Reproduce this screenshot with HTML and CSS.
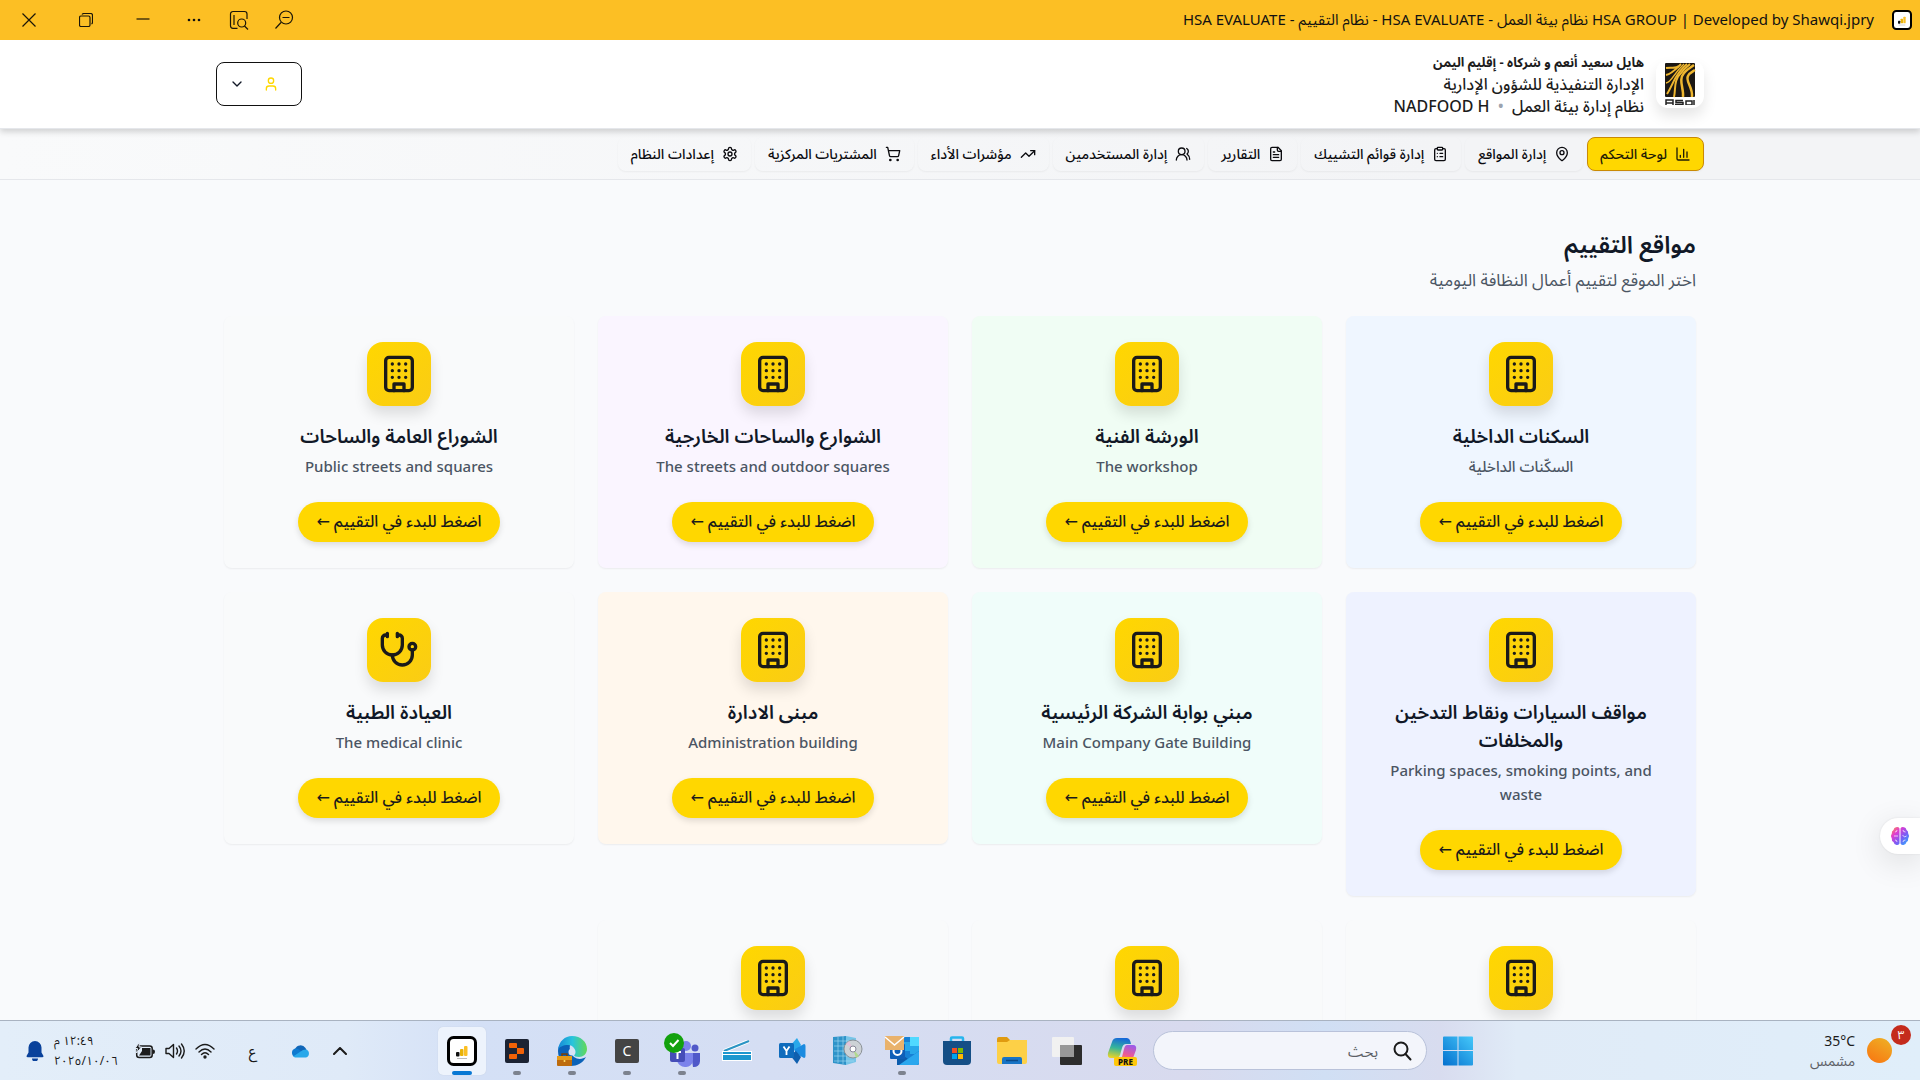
FILE: index.html
```html
<!DOCTYPE html>
<html lang="ar" dir="rtl">
<head>
<meta charset="utf-8">
<meta name="viewport" content="width=device-width, initial-scale=1">
<title>HSA EVALUATE - نظام التقييم</title>
<link rel="stylesheet" href="styles.css">
</head>
<body>
<svg class="sprite" aria-hidden="true">
  <symbol id="building" viewBox="0 0 24 24"><rect x="4" y="2" width="16" height="20" rx="2"/><path d="M9 22v-4h6v4M8 6h.01M16 6h.01M12 6h.01M12 10h.01M12 14h.01M16 10h.01M16 14h.01M8 10h.01M8 14h.01"/></symbol>
  <symbol id="stethoscope" viewBox="0 0 24 24"><path d="M11 2v2M5 2v2M5 3H4a2 2 0 0 0-2 2v4a6 6 0 0 0 12 0V5a2 2 0 0 0-2-2h-1"/><path d="M8 15a6 6 0 0 0 12 0v-3"/><circle cx="20" cy="10" r="2"/></symbol>
  <symbol id="chart" viewBox="0 0 24 24"><path d="M3 3v16a2 2 0 0 0 2 2h16M18 17V9M13 17V5M8 17v-3"/></symbol>
  <symbol id="pin" viewBox="0 0 24 24"><path d="M20 10c0 5-5.5 10.200-7.400 11.800a1 1 0 0 1-1.200 0C9.500 20.200 4 15 4 10a8 8 0 0 1 16 0"/><circle cx="12" cy="10" r="3"/></symbol>
  <symbol id="clipboard" viewBox="0 0 24 24"><rect x="8" y="2" width="8" height="4" rx="1"/><path d="M16 4h2a2 2 0 0 1 2 2v14a2 2 0 0 1-2 2H6a2 2 0 0 1-2-2V6a2 2 0 0 1 2-2h2M12 11h4M12 16h4M8 11h.01M8 16h.01"/></symbol>
  <symbol id="file" viewBox="0 0 24 24"><path d="M15 2H6a2 2 0 0 0-2 2v16a2 2 0 0 0 2 2h12a2 2 0 0 0 2-2V7Z"/><path d="M14 2v4a2 2 0 0 0 2 2h4M10 9H8M16 13H8M16 17H8"/></symbol>
  <symbol id="users" viewBox="0 0 24 24"><path d="M18 21a8 8 0 0 0-16 0"/><circle cx="10" cy="8" r="5"/><path d="M22 20c0-3.370-2-6.500-4-8a5 5 0 0 0-.450-8.300"/></symbol>
  <symbol id="trend" viewBox="0 0 24 24"><path d="m22 7-8.500 8.500-5-5L2 17"/><path d="M16 7h6v6"/></symbol>
  <symbol id="cart" viewBox="0 0 24 24"><circle cx="8" cy="21" r="1"/><circle cx="19" cy="21" r="1"/><path d="M2.050 2.050h2l2.660 12.420a2 2 0 0 0 2 1.580h9.780a2 2 0 0 0 1.950-1.570l1.650-7.430H5.120"/></symbol>
  <symbol id="gear" viewBox="0 0 24 24"><path d="M12.220 2h-.440a2 2 0 0 0-2 2v.180a2 2 0 0 1-1 1.730l-.430.250a2 2 0 0 1-2 0l-.150-.080a2 2 0 0 0-2.730.730l-.220.380a2 2 0 0 0 .730 2.730l.150.100a2 2 0 0 1 1 1.720v.510a2 2 0 0 1-1 1.740l-.150.090a2 2 0 0 0-.730 2.730l.220.380a2 2 0 0 0 2.730.730l.150-.080a2 2 0 0 1 2 0l.430.250a2 2 0 0 1 1 1.730V20a2 2 0 0 0 2 2h.440a2 2 0 0 0 2-2v-.180a2 2 0 0 1 1-1.730l.430-.250a2 2 0 0 1 2 0l.150.080a2 2 0 0 0 2.730-.730l.220-.390a2 2 0 0 0-.730-2.730l-.150-.080a2 2 0 0 1-1-1.740v-.500a2 2 0 0 1 1-1.740l.150-.090a2 2 0 0 0 .730-2.730l-.220-.380a2 2 0 0 0-2.730-.730l-.150.080a2 2 0 0 1-2 0l-.430-.250a2 2 0 0 1-1-1.730V4a2 2 0 0 0-2-2z"/><circle cx="12" cy="12" r="3"/></symbol>
  <symbol id="user" viewBox="0 0 24 24"><path d="M19 21v-2a4 4 0 0 0-4-4H9a4 4 0 0 0-4 4v2"/><circle cx="12" cy="7" r="4"/></symbol>
  <symbol id="chevron" viewBox="0 0 24 24"><path d="m6 9 6 6 6-6"/></symbol>
  <symbol id="appmark" viewBox="0 0 30 30"><rect x="1.500" y="1.500" width="27" height="27" rx="5" fill="#fff" stroke="#000" stroke-width="3"/><rect x="9" y="16" width="3.500" height="4.500" rx="1" fill="#111"/><rect x="13" y="13" width="3.500" height="7" rx="1" fill="#e9b308"/><rect x="17" y="10" width="3.500" height="10" rx="1" fill="#fbbf24"/><path d="M10 22.500h10" stroke="#bbb"/></symbol>
</svg>

<header class="titlebar" dir="ltr">
  <div class="window-tools">
    <button aria-label="إغلاق"><svg width="14" height="14" viewBox="0 0 14 14"><path d="m.5.5 13 13M13.500.5l-13 13"/></svg></button>
    <button aria-label="استعادة"><svg width="14" height="14" viewBox="0 0 14 14"><rect x=".5" y="3" width="10.500" height="10.500" rx="1.500"/><path d="M3 1.500C3.500.7 4 .5 5 .5h6.500a2 2 0 0 1 2 2V9q0 1.500-1 2"/></svg></button>
    <button aria-label="تصغير"><svg width="14" height="14" viewBox="0 0 14 14"><path d="M.5 6h13"/></svg></button>
    <button class="narrow" aria-label="المزيد"><svg width="14" height="14" viewBox="0 0 14 14"><g fill="#111" stroke="none"><circle cx="2" cy="7" r="1.300"/><circle cx="7" cy="7" r="1.300"/><circle cx="12" cy="7" r="1.300"/></g></svg></button>
    <button class="narrow" aria-label="بحث في الصفحة"><svg width="20" height="20" viewBox="0 0 20 20"><path d="M8.500 18.300H4A2.500 2.500 0 0 1 1.500 15.800V4A2.500 2.500 0 0 1 4 1.500h11.500A2.500 2.500 0 0 1 18 4v5M5 5v10M15.500 16l3.500 3.500"/><circle cx="12.700" cy="13" r="4"/></svg></button>
    <button class="narrow" aria-label="تصغير العرض"><svg width="20" height="20" viewBox="0 0 20 20"><circle cx="12" cy="7.500" r="6.500"/><path d="M1.500 18.500 7 12.500M8.500 7.500h7"/></svg></button>
  </div>
  <div class="window-title">HSA EVALUATE - نظام التقييم - HSA EVALUATE - نظام بيئة العمل HSA GROUP | Developed by Shawqi.jpry</div>
  <svg class="window-icon"><use href="#appmark"/></svg>
</header>

<div class="page">
  <header class="masthead">
    <div class="container masthead-row">
      <div class="brand">
        <div class="logo">
          <svg width="32" height="42" viewBox="0 0 32 42" role="img" aria-label="HSA">
            <rect x="1" width="30" height="34" rx="1" fill="#1b1713"/>
            <g fill="none" stroke="#eeb62f"><path d="M2 5C8 4 12 6 15 3" stroke-width="2"/><path d="M2 12C8 11 12 6 17 1" stroke-width="2"/><path d="M2 20C8 19 9 11 20 1" stroke-width="1.500"/><path d="M3 31C7 25 10 16 14 11S18 5 23 1" stroke-width="2"/><path d="M10 34C12 26 9 17 18 9 20 6 23 4 26 1" stroke-width="2"/><path d="M19 34C20 25 14 17 20 10 22 7 26 5 30 2" stroke-width="2.500"/><path d="M28 34C29 24 21 18 24 13 25 10 28 9 31 7" stroke-width="2.500"/></g>
            <g fill="none" stroke="#222" stroke-width="1.500"><path d="M2 42v-5h7v5M2 40h7M19 37.500h-7v2h7v2h-8M22 42v-4h6v4h-6M30 37v5"/></g>
          </svg>
        </div>
        <div class="brand-text">
          <strong>هايل سعيد أنعم و شركاه - إقليم اليمن</strong>
          <span>الإدارة التنفيذية للشؤون الإدارية</span>
          <span>نظام إدارة بيئة العمل <i class="dot">•</i> <span class="site">NADFOOD H</span></span>
        </div>
      </div>
      <button class="account" aria-label="الحساب"><svg class="line account-user"><use href="#user"/></svg><svg class="line account-chevron"><use href="#chevron"/></svg></button>
    </div>
  </header>

  <nav class="tabs">
    <div class="container tabs-row">
      <a class="tab active" href="#"><svg class="line"><use href="#chart"/></svg>لوحة التحكم</a>
      <a class="tab" href="#"><svg class="line"><use href="#pin"/></svg>إدارة المواقع</a>
      <a class="tab" href="#"><svg class="line"><use href="#clipboard"/></svg>إدارة قوائم التشييك</a>
      <a class="tab" href="#"><svg class="line"><use href="#file"/></svg>التقارير</a>
      <a class="tab" href="#"><svg class="line"><use href="#users"/></svg>إدارة المستخدمين</a>
      <a class="tab" href="#"><svg class="line"><use href="#trend"/></svg>مؤشرات الأداء</a>
      <a class="tab" href="#"><svg class="line"><use href="#cart"/></svg>المشتريات المركزية</a>
      <a class="tab" href="#"><svg class="line"><use href="#gear"/></svg>إعدادات النظام</a>
    </div>
  </nav>

  <main class="container content">
    <h1>مواقع التقييم</h1>
    <p class="lead">اختر الموقع لتقييم أعمال النظافة اليومية</p>
    <div class="grid">
      <article class="card blue"><div class="badge"><svg class="line"><use href="#building"/></svg></div><h2>السكنات الداخلية</h2><p>السكّنات الداخلية</p><button>اضغط للبدء في التقييم ←</button></article>
      <article class="card green"><div class="badge"><svg class="line"><use href="#building"/></svg></div><h2>الورشة الفنية</h2><p>The workshop</p><button>اضغط للبدء في التقييم ←</button></article>
      <article class="card purple"><div class="badge"><svg class="line"><use href="#building"/></svg></div><h2>الشوارع والساحات الخارجية</h2><p>The streets and outdoor squares</p><button>اضغط للبدء في التقييم ←</button></article>
      <article class="card"><div class="badge"><svg class="line"><use href="#building"/></svg></div><h2>الشوراع العامة والساحات</h2><p>Public streets and squares</p><button>اضغط للبدء في التقييم ←</button></article>
      <article class="card indigo"><div class="badge"><svg class="line"><use href="#building"/></svg></div><h2>مواقف السيارات ونقاط التدخين والمخلفات</h2><p dir="ltr">Parking spaces, smoking points, and waste</p><button>اضغط للبدء في التقييم ←</button></article>
      <article class="card teal"><div class="badge"><svg class="line"><use href="#building"/></svg></div><h2>مبني بوابة الشركة الرئيسية</h2><p>Main Company Gate Building</p><button>اضغط للبدء في التقييم ←</button></article>
      <article class="card orange"><div class="badge"><svg class="line"><use href="#building"/></svg></div><h2>مبنى الادارة</h2><p>Administration building</p><button>اضغط للبدء في التقييم ←</button></article>
      <article class="card"><div class="badge"><svg class="line"><use href="#stethoscope"/></svg></div><h2>العيادة الطبية</h2><p>The medical clinic</p><button>اضغط للبدء في التقييم ←</button></article>
      <article class="card"><div class="badge"><svg class="line"><use href="#building"/></svg></div></article>
      <article class="card"><div class="badge"><svg class="line"><use href="#building"/></svg></div></article>
      <article class="card"><div class="badge"><svg class="line"><use href="#building"/></svg></div></article>
    </div>
  </main>

  <button class="assistant" aria-label="المساعد">
    <svg width="20" height="20" viewBox="0 0 20 20"><defs><linearGradient id="br" x1="0" y1="0" x2="1" y2="1"><stop offset="0" stop-color="#ff9a3c"/><stop offset=".3" stop-color="#e23bd0"/><stop offset=".6" stop-color="#7b5cf5"/><stop offset="1" stop-color="#25b5ff"/></linearGradient></defs><path fill="url(#br)" d="M9.500 2.500Q8.500.5 6 1.200 4 1.500 3.500 4 1.500 5 1.800 7.500 0 10 1.800 12.500 1.500 15 3.500 16 4 18.500 6.500 19q2 .3 3-1.500zM10.500 2.500Q11.500.5 14 1.200q2 .3 2.500 2.800 2 1 1.700 3.500 1.800 2.500 0 5 .3 2.500-1.700 3.500-.5 2.500-3 3-2 .3-3-1.500z"/><path d="M4 10h4M5 6q2 0 2-2M5 14q2 0 2 2M13 4q0 2 2.500 2M12.500 9l2 2 2-1M13 16q0-2 2.500-2" fill="none" stroke="#fff" opacity=".7"/></svg>
  </button>
</div>

<footer class="taskbar" dir="ltr">
  <div class="tray">
    <svg width="18" height="20" viewBox="0 0 18 20"><path fill="#0a429b" d="M9 0a6.500 6.500 0 0 1 6.500 6.500v5l2 3.500a1 1 0 0 1-1 1.200h-15A1 1 0 0 1 .5 15l2-3.500v-5A6.500 6.500 0 0 1 9 0M6 17.500h6a3 3 0 0 1-6 0"/></svg>
    <div class="clock"><span dir="rtl">١٢:٤٩ م</span><span>٢٠٢٥/١٠/٠٦</span></div>
    <div class="status">
      <svg width="20" height="18" viewBox="0 0 20 18"><rect x="1.700" y="4" width="15.500" height="11.500" rx="2.500" fill="none" stroke="#1b1b1b" stroke-width="1.500"/><path fill="#1b1b1b" d="M18 7.500q2 0 2 2.200T18 12zM7 6h8.500v7.500H4L7 9z"/><path fill="#1b1b1b" stroke="#e2ecf8" d="M4.500 0 0 6.500h2.500L1.500 11l5-6H4z"/></svg>
      <svg class="stroked" width="20" height="18" viewBox="0 0 20 18"><path d="M1 6.500h3l4.500-4v13l-4.500-4H1zM11.500 6q2 3 0 6M14 4q4 5 0 10M16.500 2q5.500 7 0 14"/></svg>
      <svg class="stroked" width="20" height="18" viewBox="0 0 20 18"><path d="M1 7q9-9 18 0M4 10q6-6 12 0M6.500 12.500q3.500-3.500 7 0"/><circle cx="10" cy="15" r="1" fill="#1b1b1b"/></svg>
    </div>
    <span class="lang">ع</span>
    <svg width="20" height="14" viewBox="0 0 20 14"><path fill="#1066b8" d="M5 5a6 6 0 0 1 10.500-1l2 4L7 12z"/><path fill="#0f7ad0" d="M5 4.500a5 5 0 0 1 4 1L14 10l-9 3A4.500 4.500 0 0 1 5 4.500"/><path fill="#28a8ea" d="M3 12.500 13 6l3-.5a4.200 4.200 0 0 1 0 8H5z"/></svg>
    <svg class="stroked thick" width="14" height="8" viewBox="0 0 14 8"><path d="m1 7 6-6 6 6"/></svg>
  </div>

  <div class="dock">
    <button class="app current" aria-label="HSA EVALUATE"><svg width="30" height="30"><use href="#appmark"/></svg></button>
    <button class="app open" aria-label="Replit"><svg width="24" height="24" viewBox="0 0 24 24"><rect width="24" height="24" rx="2" fill="#1c2333"/><path fill="#f26207" d="M5 4h6a1 1 0 0 1 1 1v4H5a1 1 0 0 1-1-1V5a1 1 0 0 1 1-1M12 9h6a1 1 0 0 1 1 1v4a1 1 0 0 1-1 1h-6zM5 15h7v4a1 1 0 0 1-1 1H5a1 1 0 0 1-1-1v-3a1 1 0 0 1 1-1"/></svg></button>
    <button class="app open" aria-label="Edge"><svg width="32" height="32" viewBox="0 0 32 32"><defs><linearGradient id="e1" x1="0" x2="1"><stop offset="0" stop-color="#1689d8"/><stop offset=".5" stop-color="#28c4dc"/><stop offset="1" stop-color="#63d957"/></linearGradient></defs><path fill="#0b62b8" d="M2 16C2 9 8 5 15 7c-2 4-2 11 3 15 4 3 9 2 12 0-3 6-9 9-15 9C8 31 2 25 2 16"/><path fill="url(#e1)" d="M2 15C3 6 9 1 16 1c9 0 15 6 15 13 0 5-4 8-8 8-3 0-5-1-5-2s1-1 1-4-3-6-7-6C7 10 3 12 2 15"/><circle cx="16" cy="17" r="3.500" fill="#d8e3f6"/><rect x="1" y="21" width="15" height="10" rx="1" fill="#bd6b0c"/><path fill="#e59a18" d="M1 21h15v4H1z"/><path d="M6 21v-2h5v2" fill="none" stroke="#784006" stroke-width="1.500"/><circle cx="8.500" cy="26" r="1" fill="#ffe06a"/></svg></button>
    <button class="app open" aria-label="C"><span class="letter">C</span></button>
    <button class="app open" aria-label="Teams"><svg width="36" height="36" viewBox="0 0 36 36"><circle cx="22" cy="13" r="5" fill="#7b83eb"/><circle cx="31" cy="15" r="3.500" fill="#5059c9"/><path fill="#5059c9" d="M27 20h9v8a6 6 0 0 1-7 6z"/><path fill="#7b83eb" d="M13 20h16v7a7 7 0 0 1-8 7 8 8 0 0 1-8-7z"/><rect x="6" y="15" width="15" height="14" rx="2" fill="#454db8"/><path d="M10 19h7M13.500 19v7" stroke="#fff" stroke-width="2"/><circle cx="10" cy="10" r="10" fill="#13a10e"/><path d="m6 10 3 3 5.500-6" fill="none" stroke="#fff" stroke-width="2"/></svg></button>
    <button class="app" aria-label="Scanner"><svg width="30" height="22" viewBox="0 0 30 22"><path d="M2 11 27 1" stroke="#fff" stroke-width="4"/><path d="M2 11 27 1" stroke="#2b94c4" stroke-width="2"/><path fill="#fff" d="M0 11h30v10H0z"/><path fill="#1d97cf" d="M1 12h28v2H1zM1 15h28v5H1z"/></svg></button>
    <button class="app" aria-label="Yammer"><svg width="28" height="26" viewBox="0 0 28 26"><path fill="#28a8ea" d="m12 8 7-8 4 7-5 7z"/><path fill="#1b8be0" d="m17 11 9-5q1.500 0 1.500 2v10q0 2-1.500 2l-9-5z"/><path fill="#0f5fae" d="m12 17 7 9 4-7-5-6z"/><rect x="1" y="5" width="15" height="15" rx="1.500" fill="#0f6cbd"/><path d="m5.500 8.500 3 4.500 3-4.500M8.500 13v4" fill="none" stroke="#fff" stroke-width="1.800"/></svg></button>
    <button class="app" aria-label="Setup"><svg width="32" height="32" viewBox="0 0 32 32"><path fill="#2e93c9" d="m2 2 13-1v29L2 28z"/><path fill="#77c5e8" d="m15 1 10 2v24l-10 3z"/><path d="M3 6h20M3 11h20M3 16h20M3 21h20M3 26h20M7 2v26M12 1v28" stroke="#a9def3" stroke-width=".6"/><circle cx="22" cy="14" r="9" fill="#cdd2d6" stroke="#8b9297"/><path fill="#b1d98d" d="m22 14 6 7-3 2z"/><path fill="#e2c2d8" d="m22 14-7-5 3-3z"/><circle cx="22" cy="14" r="3" fill="#fff" stroke="#889"/></svg></button>
    <button class="app open" aria-label="Outlook"><svg width="36" height="32" viewBox="0 0 36 32"><rect x="13" y="2" width="22" height="28" rx="2" fill="#1680d5"/><path fill="#50d9ff" d="M26 2h9v9h-9z"/><path fill="#28a8ea" d="M17 7h9v9h-9zM26 11h9v8h-9z"/><path fill="#0b5cad" d="m13 16 11 8 11-8v12q0 2-2 2H13z"/><path fill="#2aa7ee" d="m35 16-20 14h18q2 0 2-2z"/><rect x="6" y="9" width="15" height="15" rx="1" fill="#0f5fb8"/><circle cx="13.500" cy="16" r="4" fill="none" stroke="#fff" stroke-width="2"/><rect x="1" y="1" width="19" height="14" fill="#e9b26c"/><path d="m1 2 9.500 8L20 2" fill="none" stroke="#fff" stroke-width="1.500"/></svg></button>
    <button class="app" aria-label="Store"><svg width="30" height="30" viewBox="0 0 30 30"><path d="M9 6V2.500Q9 1.500 10 1.500h10q1 0 1 1V6" fill="none" stroke="#27b5ed" stroke-width="2.500"/><path fill="#154f86" d="M1 5h28v20q0 4-4 4H5q-4 0-4-4z"/><path fill="#f25022" d="M10 12h5v5h-5z"/><path fill="#7fba00" d="M16 12h5v5h-5z"/><path fill="#00a4ef" d="M10 18h5v5h-5z"/><path fill="#ffb900" d="M16 18h5v5h-5z"/></svg></button>
    <button class="app" aria-label="Files"><svg width="32" height="28" viewBox="0 0 32 28"><path fill="#e09b10" d="M1 2q0-2 2-2h8l3 3v5H1z"/><path fill="#fdd047" d="M1 5h10l3-2h17v22q0 2-2 2H3q-2 0-2-2z"/><path fill="#1874c5" d="M6 27v-5q0-2 2-2h16q2 0 2 2v5z"/><path d="M10 23.500h12" stroke="#0c4a87" stroke-width="1.500"/></svg></button>
    <button class="app" aria-label="Task View"><svg width="30" height="30" viewBox="0 0 30 30"><rect x="8" y="9" width="22" height="20" rx="1" fill="#2d2d2d"/><rect x="0" y="1" width="22" height="20" rx="1" fill="#f1f1f1"/><path fill="#989898" d="M8 9h14v12H8z"/></svg></button>
    <button class="app" aria-label="Copilot"><svg width="32" height="32" viewBox="0 0 32 32"><defs><linearGradient id="c1" x1=".5" y1="0" x2=".3" y2="1"><stop offset="0" stop-color="#1769d8"/><stop offset=".5" stop-color="#35b59a"/><stop offset="1" stop-color="#e8d428"/></linearGradient><linearGradient id="c2" x1=".7" y1="0" x2=".3" y2="1"><stop offset="0" stop-color="#9b5be8"/><stop offset=".6" stop-color="#ee5a94"/><stop offset="1" stop-color="#fb923c"/></linearGradient></defs><path fill="url(#c1)" d="M11 3h10q3 0 4 6h-5q-3 0-4 4l-2 7q-1 3-5 3H5q-4 0-3-5L6 7q1-4 5-4"/><path fill="url(#c2)" d="M21 10h6q4 0 3 5l-3 8q-1 3-5 3H11q4-1 5-4l2-8q1-4 3-4"/><rect x="8" y="22" width="23" height="9" rx="2" fill="#ffc80a"/><text x="19.500" y="29.500" text-anchor="middle" class="pre">PRE</text></svg></button>
    <label class="search"><input type="search" placeholder="بحث" dir="rtl" aria-label="بحث"><svg class="stroked" width="20" height="20" viewBox="0 0 20 20"><circle cx="9" cy="8" r="6.500"/><path d="m13.500 13 5 5.500"/></svg></label>
    <button class="app" aria-label="ابدأ"><svg width="30" height="30" viewBox="0 0 30 30"><defs><linearGradient id="w" x1="1" y1="0" x2="0" y2="1"><stop offset="0" stop-color="#45c8fa"/><stop offset="1" stop-color="#0470ce"/></linearGradient></defs><path fill="url(#w)" d="M1 .5h13.500V14H0V1.500q0-1 1-1M15.500.5H29q1 0 1 1V14H15.500zM0 15h14.500v14.500H1q-1 0-1-1zM15.500 15H30v13.500q0 1-1 1H15.500z"/></svg></button>
  </div>

  <div class="weather">
    <div class="weather-text"><span>35°C</span><span class="muted">مشمس</span></div>
    <div class="sun"><span class="count">٣</span></div>
  </div>
</footer>
</body>
</html>
```
FILE: styles.css
```css
* { box-sizing: border-box; }
body {
  margin: 0;
  height: 100vh;
  display: flex;
  flex-direction: column;
  overflow: hidden;
  background: #f9fafc;
  color: #111827;
  font-family: "Noto Sans", "Noto Sans Arabic", "DejaVu Sans", sans-serif;
  font-size: 15px;
}
button { font: inherit; color: inherit; border: 0; padding: 0; background: none; }
h1, h2, p { margin: 0; }
.sprite { position: absolute; width: 0; height: 0; }
.line { fill: none; stroke: currentColor; stroke-width: 2; stroke-linecap: round; stroke-linejoin: round; }

.titlebar { flex: none; height: 40px; display: flex; align-items: center; background: #fcbf24; color: #111; padding-right: 8px; }
.window-tools { display: flex; align-items: center; }
.window-tools button { width: 57px; height: 38px; display: grid; place-items: center; }
.window-tools .narrow { width: 45px; }
.window-tools svg { fill: none; stroke: #1b1608; stroke-width: 1.2; }
.window-title { margin-left: auto; font-size: 15px; white-space: nowrap; }
.window-icon { width: 20px; height: 20px; margin-left: 18px; }

.page { position: relative; flex: 1; min-height: 0; overflow: hidden; }
.container { width: 100%; max-width: 1536px; margin: 0 auto; padding: 0 24px; }
.masthead { position: relative; background: #fff; border-bottom: 1px solid #e5e7eb; box-shadow: 0 3px 6px rgba(0, 0, 0, .16); }
.masthead-row { height: 88px; display: flex; align-items: center; justify-content: space-between; }
.brand { display: flex; align-items: center; gap: 12px; }
.logo { width: 48px; height: 48px; border-radius: 12px; display: grid; place-items: center; background: #fff; box-shadow: 0 8px 14px rgba(0, 0, 0, .1); }
.brand-text { display: flex; flex-direction: column; line-height: 22px; font-size: 16px; color: #1c1c1c; font-weight: 500; }
.brand-text strong { font-size: 13px; }
.dot { color: #9ca3af; font-style: normal; margin: 0 4px; }
.account { width: 86px; height: 44px; border: 1px solid #111; border-radius: 8px; display: flex; align-items: center; justify-content: space-between; padding: 0 22px 0 12px; }
.account-user { width: 16px; height: 16px; color: #ffd700; }
.account-chevron { width: 16px; height: 16px; }

.tabs { background: linear-gradient(to left, #f3f4f6, #f3f4f6 25%, #f9fafb); border-bottom: 1px solid #e5e7eb; }
.tabs-row { height: 50px; display: flex; align-items: center; gap: 4px; }
.tab { height: 34px; padding: 0 12px; border: 1px solid transparent; border-radius: 8px; display: flex; align-items: center; gap: 8px; color: #0b0b0f; text-decoration: none; font-size: 14px; font-weight: 500; white-space: nowrap; box-shadow: 0 1px 2px rgba(0, 0, 0, .05); }
.tab svg { width: 16px; height: 16px; }
.tab.active { background: #ffd700; border-color: #ca8a04; color: #1f1c05; }

.content { padding: 48px 32px 0; }
h1 { font-size: 24px; line-height: 32px; font-weight: 600; }
.lead { margin-top: 8px; font-size: 17px; line-height: 24px; color: #4b5563; }
.grid { margin-top: 24px; display: grid; grid-template-columns: repeat(4, 1fr); gap: 24px; align-items: start; }
.card { min-height: 252px; padding: 26px; border-radius: 8px; display: flex; flex-direction: column; align-items: center; text-align: center; background: #f9fafb; box-shadow: 0 1px 2px rgba(0, 0, 0, .06); }
.blue { background: #eff6ff; }
.green { background: #f0fdf4; }
.purple { background: #faf5ff; }
.indigo { background: #eef2ff; }
.teal { background: #f0fdfa; }
.orange { background: #fff7ed; }
.badge { width: 64px; height: 64px; margin-bottom: 16px; border-radius: 16px; display: grid; place-items: center; background: linear-gradient(135deg, #ffd700, #facc15); color: #1a1a1a; box-shadow: 0 8px 14px rgba(0, 0, 0, .12); }
.badge svg { width: 40px; height: 40px; }
.card h2 { font-size: 19px; line-height: 28px; font-weight: 600; }
.card p { margin-top: 4px; line-height: 24px; font-weight: 500; color: #4b5563; }
.card button { margin-top: 24px; height: 40px; padding: 0 18px; border-radius: 20px; background: #ffd700; color: #1a1a1a; font-size: 16px; font-weight: 500; white-space: nowrap; box-shadow: 0 3px 6px rgba(0, 0, 0, .12); }

.assistant { position: absolute; right: 0; top: 778px; width: 40px; height: 36px; border-radius: 18px 0 0 18px; display: grid; place-items: center; background: #fff; box-shadow: 0 8px 32px rgba(0, 0, 0, .12), 0 0 2px rgba(0, 0, 0, .1); }

.taskbar { flex: none; height: 60px; border-top: 1px solid #a9b3c1; display: grid; grid-template-columns: 1fr auto 1fr; align-items: center; background: linear-gradient(to right, #e3eef9, #dfeaf8 18%, #d4e0f6 25%, #d5def3 40%, #d8daee 62%, #d0dff4 69%, #d8dcef 75%, #e0ebf7 79%, #e0eefa); color: #1b1b1b; }
.stroked { fill: none; stroke: #1b1b1b; stroke-width: 1.4; stroke-linecap: round; stroke-linejoin: round; }
.thick { stroke-width: 2; }
.tray { display: flex; align-items: center; padding-left: 26px; }
.clock { display: flex; flex-direction: column; align-items: flex-start; margin-left: 10px; width: 81px; font-size: 12px; line-height: 20px; white-space: nowrap; }
.status { display: flex; gap: 10px; }
.lang { width: 75px; text-align: center; }
.tray .thick { margin-left: 23px; }
.dock { display: flex; align-items: center; gap: 7px; }
.app { position: relative; width: 48px; height: 48px; border-radius: 5px; display: grid; place-items: center; }
.current { background: #edf3fc; box-shadow: 0 0 1px #b8c4d8; }
.current::after, .open::after { content: ""; position: absolute; bottom: 0; left: 50%; width: 8px; height: 4px; margin-left: -4px; border-radius: 2px; background: #7c828e; }
.current::after { width: 20px; margin-left: -10px; background: #0878d4; }
.letter { width: 24px; height: 24px; border-radius: 2px; background: #444; color: #fff; font-size: 14px; line-height: 24px; }
.pre { font-size: 8px; font-weight: 800; fill: #111; }
.search { width: 274px; height: 39px; border: 1px solid #b9c2da; border-radius: 20px; background: #f3f5fb; display: flex; align-items: center; gap: 12px; padding: 0 14px; }
.search input { flex: 1; min-width: 0; border: 0; outline: 0; background: none; font: inherit; }
.search input::placeholder { color: #5c5f66; opacity: 1; }
.search .stroked { stroke-width: 2; }
.weather { display: flex; align-items: center; justify-content: flex-end; gap: 12px; padding-right: 28px; }
.weather-text { display: flex; flex-direction: column; align-items: flex-end; font-size: 14px; line-height: 20px; }
.muted { color: #5c5f66; }
.sun { position: relative; width: 25px; height: 25px; border-radius: 50%; background: linear-gradient(30deg, #f97310, #eeb326); }
.count { position: absolute; right: -19px; top: -13px; width: 20px; height: 20px; border-radius: 50%; background: #c42b1c; color: #fff; font-size: 12px; line-height: 20px; text-align: center; }
```
